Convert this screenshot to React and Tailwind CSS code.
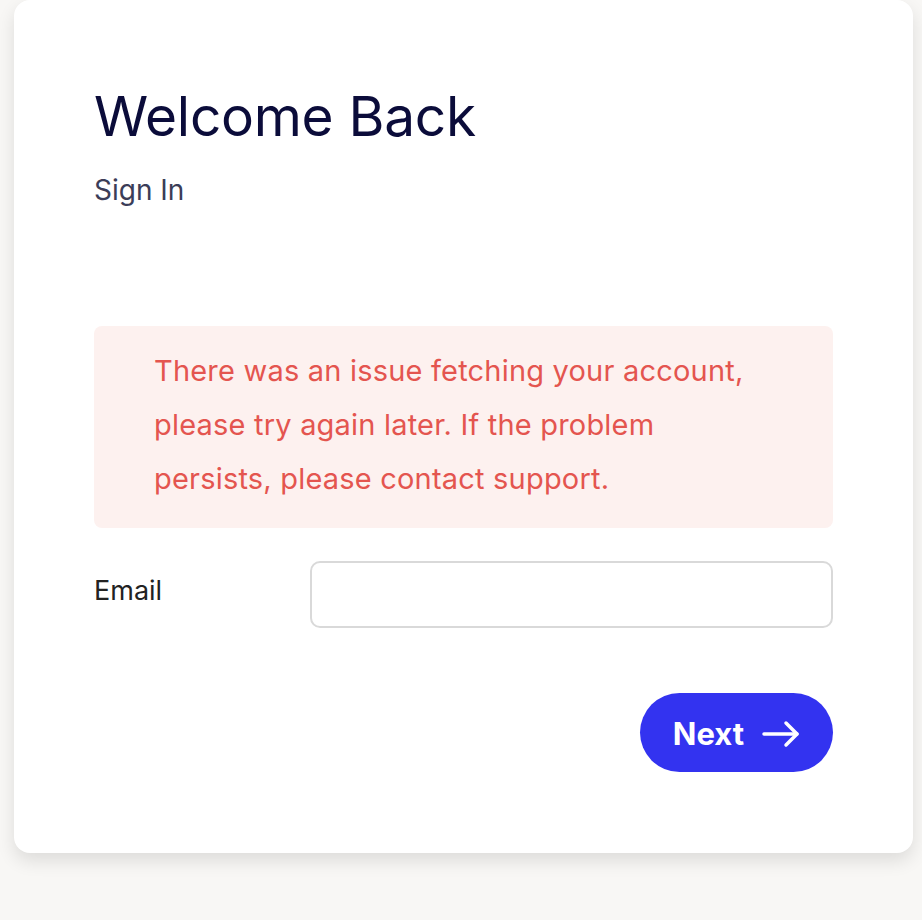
export default function App() {
  return (
    <div
      className="min-h-[920px] w-full bg-[#f8f7f5] px-[14px]"
      style={{ fontFamily: 'Inter, "Noto Sans", sans-serif' }}
    >
      <div className="w-[899px] rounded-[16px] bg-white px-[80px] pb-[81px] pt-[84px] shadow-[0_8px_18px_rgba(0,0,0,0.11)]">
        <h1 className="text-[55px] font-normal leading-[64px] tracking-[-0.3px] text-[#0b0c3a]">Welcome Back</h1>
        <p className="mt-[26px] text-[28px] leading-[32px] text-[#3b3d58]">Sign In</p>

        <div className="mt-[120px] rounded-[8px] bg-[#fdf1ef] pb-[22px] pl-[60px] pr-[60px] pt-[18px]">
          <p className="text-[29px] leading-[54px] tracking-[0.2px] text-[#e4554f]">
            There was an issue fetching your account, please try again later. If the problem persists, please contact support.
          </p>
        </div>

        <div className="mt-[33px] flex items-center">
          <label className="-mt-[8px] w-[216px] text-[27px] leading-[32px] text-[#222]">Email</label>
          <input
            type="email"
            className="h-[67px] flex-1 rounded-[10px] border-2 border-[#d9d9d9] bg-white px-4 text-[24px] outline-none"
          />
        </div>

        <div className="mt-[65px] flex justify-end">
          <button className="flex h-[79px] items-center gap-[18px] rounded-full bg-[#3333f0] pl-[33px] pr-[33px] pt-[3px] text-[31px] font-bold text-white">
            Next
            <svg width="38" height="28" viewBox="0 0 38 28" fill="none" stroke="currentColor" strokeWidth="3.5" strokeLinecap="round" strokeLinejoin="round">
              <path d="M2 14h33" />
              <path d="M24 3l11 11-11 11" />
            </svg>
          </button>
        </div>
      </div>
    </div>
  );
}
